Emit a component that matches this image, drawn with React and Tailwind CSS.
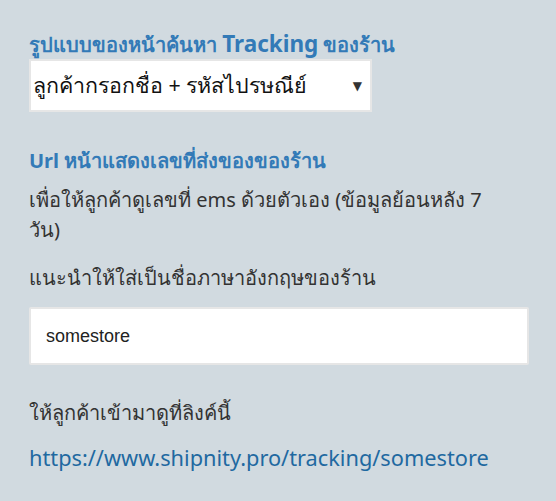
import React from 'react';

export default function App() {
  return (
    <div
      className="w-[556px] h-[501px] bg-[#d1dae0] overflow-hidden pl-[29px] pr-[27px] pt-[31px]"
      style={{ fontFamily: '"Noto Sans", "DejaVu Sans", sans-serif' }}
    >
      {/* Tracking page format */}
      <h2 className="text-[20px] font-bold text-[#337ab7] leading-[28px] whitespace-nowrap">
        รูปแบบของหน้าค้นหา <span className="text-[22.5px] leading-[20px]">Tracking</span> ของร้าน
      </h2>
      <div className="mt-0 w-[343px] h-[53px] bg-white border-2 border-[#e6e6e6] flex items-center justify-between pl-[2px] pr-[8px]">
        <span className="text-[21.4px] text-[#111]">ลูกค้ากรอกชื่อ + รหัสไปรษณีย์</span>
        <span className="text-[12px] text-[#333]">▼</span>
      </div>

      {/* Tracking url */}
      <h2 className="mt-[35px] text-[20px] font-bold text-[#337ab7] leading-[28px]">
        Url หน้าแสดงเลขที่ส่งของของร้าน
      </h2>
      <p className="mt-[10px] text-[20px] text-[#333] leading-[30px]">
        เพื่อให้ลูกค้าดูเลขที่ ems ด้วยตัวเอง (ข้อมูลย้อนหลัง 7<br />วัน)
      </p>
      <p className="mt-[18px] text-[20px] text-[#333] leading-[30px]">
        แนะนำให้ใส่เป็นชื่อภาษาอังกฤษของร้าน
      </p>
      <div className="mt-[14px] h-[58px] bg-white border-2 border-[#e6e6e6] rounded-[2px] flex items-center pl-[15px]">
        <span className="text-[18px] text-[#222]" style={{ fontFamily: '"Liberation Sans", sans-serif' }}>somestore</span>
      </div>
      <p className="mt-[33px] text-[20px] text-[#333] leading-[30px]">
        ให้ลูกค้าเข้ามาดูที่ลิงค์นี้
      </p>
      <p className="mt-[15px] text-[21.75px] text-[#1f69a1] leading-[30px] whitespace-nowrap">
        https://www.shipnity.pro/tracking/somestore
      </p>
    </div>
  );
}
